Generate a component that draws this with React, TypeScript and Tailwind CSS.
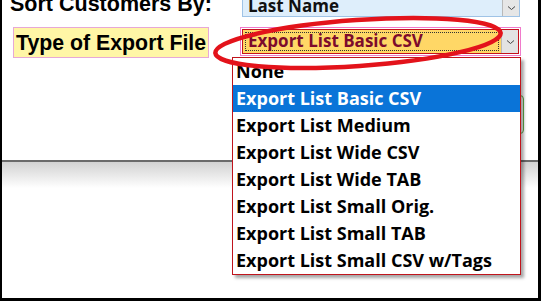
const options = [
  'None',
  'Export List Basic CSV',
  'Export List Medium',
  'Export List Wide CSV',
  'Export List Wide TAB',
  'Export List Small Orig.',
  'Export List Small TAB',
  'Export List Small CSV w/Tags',
];

const uiFont = { fontFamily: '"Open Sans", "Noto Sans", sans-serif' };
const labelFont = { fontFamily: '"Liberation Sans", Arial, sans-serif' };

function Chevron() {
  return (
    <svg width="9" height="6" viewBox="0 0 9 6" fill="none">
      <path d="M1 1.5 L4.5 4.5 L8 1.5" stroke="#444" strokeWidth="1" />
    </svg>
  );
}

export default function App() {
  const selected = 1;

  return (
    <div className="relative w-[541px] h-[301px] overflow-hidden bg-white border-l-2 border-r-[3px] border-b-[3px] border-black">
      {/* top form rows */}
      <div className="flex flex-col">
        <div className="flex h-[17px] items-start">
          <div
            className="ml-[8px] -mt-[6px] text-[21.5px] leading-[21px] font-bold text-black whitespace-nowrap"
            style={labelFont}
          >
            Sort Customers By:
          </div>
          <div className="ml-auto mr-[18px] flex h-[17px] w-[278px] items-center border border-t-0 border-[#9fc3e6] bg-[#deeefb]">
            <span
              className="ml-[5px] -mt-[6px] text-[17px] font-bold leading-[17px] text-[#111]"
              style={uiFont}
            >
              Last Name
            </span>
            <div className="ml-auto flex h-[16px] w-[17px] items-center justify-center border-l border-[#b9b9b9] bg-[#e6e6e6]">
              <Chevron />
            </div>
          </div>
        </div>

        <div className="mt-[10px] flex h-[31px] items-start">
          <div
            className="ml-[11px] flex h-[31px] w-[196px] items-center border border-[#e7a8d6] bg-[#fff6a6] pl-[2px] text-[21.3px] font-bold leading-[22px] text-black whitespace-nowrap"
            style={labelFont}
          >
            Type of Export File
          </div>
          <div className="ml-[31px] flex h-[29px] w-[281px] border border-[#f07acb] p-px">
            <div className="flex flex-1 items-stretch border border-[#c4121c] bg-[#ffd766]">
              <div className="m-[2px] flex flex-1 items-center border border-dotted border-[#333] pl-[2px]">
                <span
                  className="text-[17px] font-bold leading-[17px] text-[#7d0b2c] -mt-[2px]"
                  style={uiFont}
                >
                  {options[selected]}
                </span>
              </div>
              <div className="flex w-[17px] items-center justify-center border-l border-[#b9b9b9] bg-[#e3e3e3]">
                <Chevron />
              </div>
            </div>
          </div>
        </div>

        <div className="mt-[37px] flex h-[39px] justify-end">
          <div className="mr-[14px] h-[39px] w-[45px] rounded-[4px] border border-[#62b04a] bg-[#f4f4f4]" />
        </div>

        <div className="mt-[26px] h-[2px] bg-[#6a6a6a]" />
        <div className="h-[26px] bg-gradient-to-b from-[#d2d2d2] to-white" />
      </div>

      {/* open dropdown list */}
      <div
        className="absolute left-[230px] top-[57px] w-[289px] border border-[#c0141c] bg-white shadow-[3px_3px_3px_rgba(0,0,0,0.35)]"
        style={uiFont}
      >
        {options.map((opt, i) => (
          <div
            key={opt}
            className={
              i === selected
                ? 'h-[27px] bg-[#0a74d8] pl-[3px] text-[18px] font-bold leading-[26px] text-white whitespace-nowrap'
                : 'h-[27px] pl-[3px] text-[18px] font-bold leading-[26px] text-black whitespace-nowrap'
            }
          >
            {opt}
          </div>
        ))}
      </div>

      {/* red annotation ellipse */}
      <svg
        className="pointer-events-none absolute left-0 top-0"
        width="541"
        height="301"
        viewBox="0 0 541 301"
      >
        <ellipse
          cx="356"
          cy="43"
          rx="143"
          ry="23"
          transform="rotate(-4 356 43)"
          fill="none"
          stroke="#e3131b"
          strokeWidth="4.5"
        />
      </svg>
    </div>
  );
}
